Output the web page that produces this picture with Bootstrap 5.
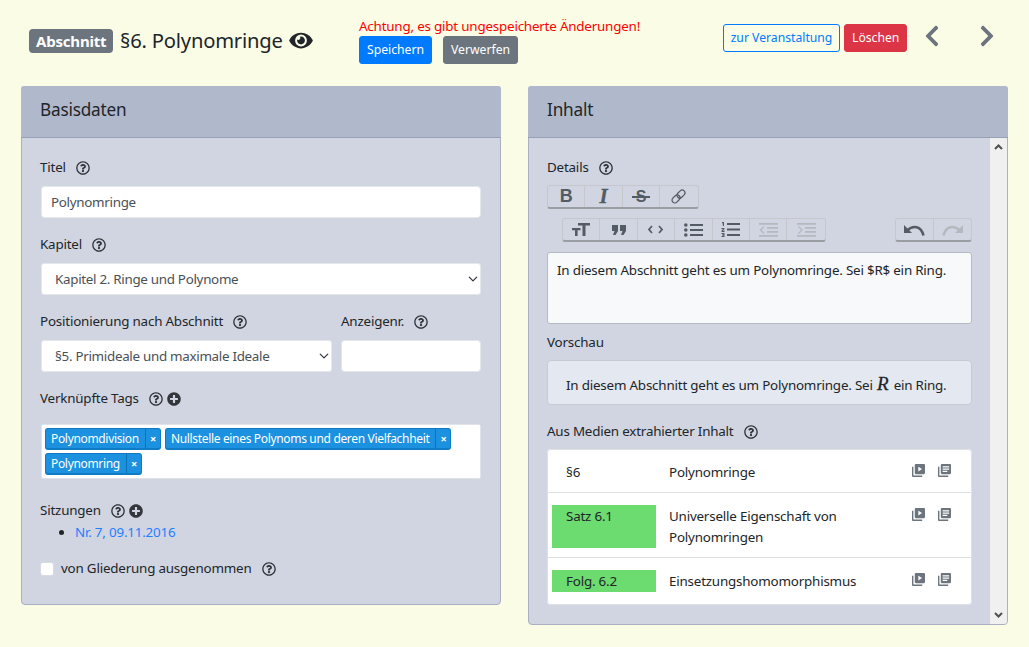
<!DOCTYPE html>
<html lang="de">
<head>
  <meta charset="UTF-8">
  <title>Abschnitt bearbeiten</title>
  <link href="https://cdn.jsdelivr.net/npm/bootstrap@5.3.3/dist/css/bootstrap.min.css" rel="stylesheet">
  <style>
    html, body { height: 100%; }
    body { background: #fafce6; color: #212529; font-family: "Noto Sans", sans-serif; font-size: 13.4px; letter-spacing: -0.2px; line-height: 21px; overflow: hidden; }
    svg { fill: currentColor; display: block; flex: none; }
    svg.line-ic { fill: none; stroke: currentColor; }

    .page-top { height: 86px; }
    .top-left { padding: 24px 0 0 29px; align-items: center; width: 359px; height: 56px; }
    .kind-tag { background: #6c757d; color: #fff; font-weight: 700; font-size: 15px; line-height: 24px; border-radius: 4px; padding: 0 7px; margin-top: 1px; width: 84px; white-space: nowrap; }
    .page-name { font-size: 20.2px; line-height: 30px; margin: 0 6px 0 7px; }
    .warn-col { padding-top: 16px; width: 364px; }
    .warn-text { color: #f00; line-height: 20px; }
    .save-row { gap: 11px; }
    .btn-tight { font-size: 12.2px; letter-spacing: 0; line-height: 18px; padding: 4px 7px; border-radius: 3px; height: 28px; white-space: nowrap; }
    .btn-blue { background: #007bff; border-color: #007bff; color: #fff; }
    .btn-blue-line { border-color: #007bff; color: #007bff; width: 117px; padding-left: 0; padding-right: 0; }
    .btn-grey { background: #6c757d; border-color: #6c757d; color: #fff; }
    .btn-red { background: #dc3545; border-color: #dc3545; color: #fff; }
    .top-right { padding-top: 24px; }
    .nav-arrow { color: #6c757d; }
    .arrow-prev { margin-left: 17px; }
    .arrow-next { margin-left: 39px; }

    .cols { padding-left: 21px; gap: 27px; align-items: flex-start; }
    .panel { width: 480px; background: #d0d5e1; border: 1px solid #a9b0c2; border-radius: 4px; }
    .panel-head { background: #b0b8cc; border-bottom: 1px solid #97a0b6; font-size: 17.2px; line-height: 26px; padding: 11px 19px 13px; color: #212529; border-radius: 3px 3px 0 0; margin: -1px -1px 0; height: 52px; }
    .panel-left-body { padding: 19px 19px 0; height: 466px; }
    .panel-right-body { height: 486px; display: flex; }
    .right-scroll { flex: 1; padding: 19px 0 0 18px; }
    .scroll-rail { width: 17px; background: #f0f0f0; display: flex; flex-direction: column; justify-content: space-between; align-items: center; padding: 6px 0; color: #505050; border-radius: 0 0 3px 0; }

    .field-label { display: flex; align-items: center; line-height: 21px; margin-bottom: 8px; }
    .panel-left-body .field-label { margin-left: -1px; }
    .panel-left-body .num-col .field-label { margin-left: 0; }
    .help-mark { width: 14px; height: 14px; margin-left: 10px; color: #2d3136; }
    .add-mark { width: 14px; height: 14px; margin-left: 4px; color: #33373c; }
    .field-gap { margin-bottom: 16px; }
    .form-control.plain-input, .form-select.plain-input { height: 32px; font-size: 13.4px; letter-spacing: -0.3px; line-height: 21px; padding: 5px 9px; border: 1px solid #e4e7ec; border-radius: 3px; color: #495057; }
    .form-select.plain-input { padding-left: 13px; background-position: right 2px center; background-size: 10px 10px; }
    .pos-col { width: 291px; }
    .num-col { width: 140px; margin-left: 1px; }

    .tag-box { background: #fff; border: 1px solid #e0e3ea; border-radius: 2px; height: 55px; padding: 3px; margin: 15px 0 21px; display: flex; flex-wrap: wrap; gap: 3px 4px; align-content: flex-start; }
    .tag-item { display: flex; height: 22px; background: #1b91e0; border: 1px solid #0f7bc4; border-bottom-width: 2px; border-radius: 3px; color: #fff; font-size: 12px; letter-spacing: -0.33px; line-height: 19px; }
    .tag-name { padding: 0 6px 0 5px; }
    .tag-x { border-left: 1px solid #0f72b5; width: 15px; text-align: center; font-weight: 700; font-size: 11px; }
    .session-list { padding-left: 34px; margin: -7px 0 15px; }
    .session-list a { color: #1f7fff; text-decoration: none; }
    .check-row { display: flex; align-items: center; margin-left: -1px; }
    .check-row .form-check-input { width: 14px; height: 14px; margin: 0 7px 0 0; border: 1px solid #d8dbe3; border-radius: 3px; }

    .tool-row { display: flex; width: fit-content; height: 24px; border: 1px solid #c4c7cc; border-bottom: 2px solid #9a9da2; border-radius: 3px; color: #555b62; }
    .tool-cell { width: 37.4px; display: flex; align-items: center; justify-content: center; border-right: 1px solid #c4c7cc; position: relative; }
    .tool-cell:last-child { border-right: 0; }
    .tool-off { color: #b4b9c0; }
    .tool-glyph-b { font-family: "Liberation Sans", sans-serif; font-weight: 700; font-size: 18px; }
    .tool-glyph-i { font-family: "Liberation Serif", serif; font-style: italic; font-weight: 700; font-size: 21px; -webkit-text-stroke: 0.3px #555b62; }
    .tool-glyph-s { font-family: "Liberation Sans", sans-serif; font-weight: 700; font-size: 16px; }
    .strike-line { position: absolute; left: 9px; right: 9px; top: 10px; height: 2px; background: #555b62; }
    .tool-line2 { margin: 9px 0 10px 15px; width: 410px; justify-content: space-between; }
    .editor-area { height: 72px; background: #f7f9fa; border: 1px solid #b6bac3; border-radius: 3px; padding: 7px 9px; margin-bottom: 8px; width: 425px; }
    .preview-box { height: 45px; width: 425px; background: #e4e8f0; border: 1px solid #c6cad3; border-radius: 4px; padding: 12px 18px; margin-bottom: 16px; white-space: nowrap; }
    .math-r { font-family: "Liberation Serif", serif; font-style: italic; font-size: 19px; margin: 0 2px 0 1px; -webkit-text-stroke: 0.3px #212529; }
    .extract-list { width: 425px; border-radius: 4px; background: #fff; }
    .extract-list .list-group-item { border-color: #dde0e5; padding: 12px 0 9px 4px; display: flex; font-size: 13.4px; line-height: 21px; color: #212529; }
    .extract-list .row-first { padding-top: 11px; padding-bottom: 9px; }
    .extract-list .row-last { padding-bottom: 12px; }
    .num-cell { width: 104px; padding: 1px 0 0 14px; flex: none; }
    .num-green { background: #6cdb70; }
    .num-tall { height: 43px; }
    .num-short { height: 22px; }
    .title-cell { width: 243px; padding-top: 1px; margin-left: 13px; flex: none; }
    .media-icons { display: flex; gap: 13px; color: #6c757d; padding-top: 3px; }
  </style>
</head>
<body>
  <svg width="0" height="0" class="position-absolute">
    <defs>
      <symbol id="ic-help" viewBox="0 0 512 512"><path d="M256 8C119.043 8 8 119.083 8 256c0 136.997 111.043 248 248 248s248-111.003 248-248C504 119.083 392.957 8 256 8zm0 448c-110.532 0-200-89.431-200-200 0-110.495 89.472-200 200-200 110.491 0 200 89.471 200 200 0 110.53-89.431 200-200 200zm107.244-255.2c0 67.052-72.421 68.084-72.421 92.863V300c0 6.627-5.373 12-12 12h-45.647c-6.627 0-12-5.373-12-12v-8.659c0-35.745 27.1-50.034 47.579-61.516 17.561-9.845 28.324-16.541 28.324-29.579 0-17.246-21.999-28.693-39.784-28.693-23.189 0-33.894 10.977-48.942 29.969-4.057 5.12-11.46 6.071-16.666 2.124l-27.824-21.098c-5.107-3.872-6.251-11.066-2.644-16.363C184.846 131.491 214.94 112 261.794 112c49.071 0 101.45 38.304 101.45 88.8zM298 368c0 23.159-18.841 42-42 42s-42-18.841-42-42 18.841-42 42-42 42 18.841 42 42z"/></symbol>
      <symbol id="ic-plus" viewBox="0 0 512 512"><path d="M256 8C119 8 8 119 8 256s111 248 248 248 248-111 248-248S393 8 256 8zm144 276c0 6.6-5.4 12-12 12h-92v92c0 6.6-5.4 12-12 12h-56c-6.6 0-12-5.4-12-12v-92h-92c-6.6 0-12-5.4-12-12v-56c0-6.6 5.4-12 12-12h92v-92c0-6.6 5.4-12 12-12h56c6.6 0 12 5.4 12 12v92h92c6.6 0 12 5.4 12 12v56z"/></symbol>
      <symbol id="ic-video" viewBox="0 0 14 14"><rect x="3" y="0" width="11" height="11" rx="1.2"/><path d="M6.8 3l4 2.500-4 2.500z" fill="#fff"/><path d="M0 3h1.500v9.500H11V14H1a1 1 0 0 1-1-1z"/></symbol>
      <symbol id="ic-notes" viewBox="0 0 14 14"><rect x="3" y="0" width="11" height="11" rx="1.2"/><path d="M5 2.500h7v1.300H5zM5 4.900h7v1.300H5zM5 7.300h5v1.300H5z" fill="#fff"/><path d="M0 3h1.500v9.500H11V14H1a1 1 0 0 1-1-1z"/></symbol>
    </defs>
  </svg>

  <div class="page-top d-flex">
    <div class="top-left d-flex">
      <span class="kind-tag">Abschnitt</span>
      <span class="page-name">§6. Polynomringe</span>
      <svg width="24" height="21" viewBox="0 0 576 512" class="text-dark"><path d="M572.52 241.4C518.29 135.59 410.93 64 288 64S57.68 135.64 3.48 241.41a32.35 32.35 0 0 0 0 29.19C57.71 376.41 165.07 448 288 448s230.32-71.64 284.52-177.41a32.35 32.35 0 0 0 0-29.19zM288 400a144 144 0 1 1 144-144 143.93 143.93 0 0 1-144 144zm0-240a95.31 95.31 0 0 0-25.31 3.79 47.85 47.85 0 0 1-66.9 66.9A95.78 95.78 0 1 0 288 160z"/></svg>
    </div>
    <div class="warn-col">
      <div class="warn-text">Achtung, es gibt ungespeicherte Änderungen!</div>
      <div class="d-flex save-row">
        <button class="btn btn-tight btn-blue">Speichern</button>
        <button class="btn btn-tight btn-grey">Verwerfen</button>
      </div>
    </div>
    <div class="top-right d-flex">
      <button class="btn btn-tight btn-blue-line me-1">zur Veranstaltung</button>
      <button class="btn btn-tight btn-red">Löschen</button>
      <svg class="nav-arrow arrow-prev" width="16" height="24" viewBox="0 0 320 512"><path d="M34.52 239.03L228.87 44.69c9.37-9.37 24.57-9.37 33.94 0l22.67 22.67c9.36 9.36 9.37 24.52.04 33.9L131.49 256l154.02 154.75c9.34 9.38 9.32 24.54-.04 33.9l-22.67 22.67c-9.37 9.37-24.57 9.37-33.94 0L34.52 272.97c-9.37-9.37-9.37-24.57 0-33.94z"/></svg>
      <svg class="nav-arrow arrow-next" width="16" height="24" viewBox="0 0 320 512"><path d="M285.476 272.971L91.132 467.314c-9.373 9.373-24.569 9.373-33.941 0l-22.667-22.667c-9.357-9.357-9.375-24.522-.04-33.901L188.505 256 34.484 101.255c-9.335-9.379-9.317-24.544.04-33.901l22.667-22.667c9.373-9.373 24.569-9.373 33.941 0L285.475 239.03c9.373 9.372 9.373 24.568.001 33.941z"/></svg>
    </div>
  </div>

  <div class="cols d-flex">
    <!-- Basisdaten -->
    <div class="panel">
      <div class="panel-head">Basisdaten</div>
      <div class="panel-left-body">
        <div class="field-label">Titel <svg class="help-mark"><use href="#ic-help"/></svg></div>
        <input class="form-control plain-input field-gap" value="Polynomringe">

        <div class="field-label">Kapitel <svg class="help-mark"><use href="#ic-help"/></svg></div>
        <select class="form-select plain-input field-gap"><option>Kapitel 2. Ringe und Polynome</option></select>

        <div class="d-flex gap-2 field-gap">
          <div class="pos-col">
            <div class="field-label">Positionierung nach Abschnitt <svg class="help-mark"><use href="#ic-help"/></svg></div>
            <select class="form-select plain-input"><option>§5. Primideale und maximale Ideale</option></select>
          </div>
          <div class="num-col">
            <div class="field-label">Anzeigenr. <svg class="help-mark"><use href="#ic-help"/></svg></div>
            <input class="form-control plain-input">
          </div>
        </div>

        <div class="field-label mb-0">Verknüpfte Tags <svg class="help-mark"><use href="#ic-help"/></svg><svg class="add-mark"><use href="#ic-plus"/></svg></div>
        <div class="tag-box">
          <div class="tag-item"><span class="tag-name">Polynomdivision</span><span class="tag-x">×</span></div>
          <div class="tag-item"><span class="tag-name">Nullstelle eines Polynoms und deren Vielfachheit</span><span class="tag-x">×</span></div>
          <div class="tag-item"><span class="tag-name">Polynomring</span><span class="tag-x">×</span></div>
        </div>

        <div class="field-label">Sitzungen <svg class="help-mark"><use href="#ic-help"/></svg><svg class="add-mark"><use href="#ic-plus"/></svg></div>
        <ul class="session-list"><li><a href="#">Nr. 7, 09.11.2016</a></li></ul>

        <label class="check-row"><input type="checkbox" class="form-check-input">von Gliederung ausgenommen <svg class="help-mark"><use href="#ic-help"/></svg></label>
      </div>
    </div>

    <!-- Inhalt -->
    <div class="panel">
      <div class="panel-head">Inhalt</div>
      <div class="panel-right-body">
        <div class="right-scroll">
          <div class="field-label" style="margin-bottom:7px">Details <svg class="help-mark"><use href="#ic-help"/></svg></div>
          <div class="tool-row">
            <span class="tool-cell"><span class="tool-glyph-b">B</span></span>
            <span class="tool-cell"><span class="tool-glyph-i">I</span></span>
            <span class="tool-cell"><span class="tool-glyph-s">S</span><span class="strike-line"></span></span>
            <span class="tool-cell">
              <svg class="line-ic" width="17" height="17" viewBox="0 0 17 17" stroke-width="1.2"><g transform="rotate(-45 8.5 8.500)"><rect x="0.500" y="5.700" width="9" height="5.600" rx="2.800"/><rect x="7.500" y="5.700" width="9" height="5.600" rx="2.800"/></g></svg>
            </span>
          </div>
          <div class="d-flex tool-line2">
            <div class="tool-row">
              <span class="tool-cell"><svg width="18" height="13" viewBox="0 0 18 13"><path d="M6 0h12v2.600h-4.500V13h-3V2.600H6zM0 5h8.500v2.200H5.600V13H3V7.200H0z"/></svg></span>
              <span class="tool-cell"><svg width="14" height="10" viewBox="0 0 14 10"><path d="M0 0h6v6l-2.500 4H1l1.500-4H0zM8 0h6v6l-2.500 4H9l1.500-4H8z"/></svg></span>
              <span class="tool-cell"><svg class="line-ic" width="15" height="9" viewBox="0 0 15 9" stroke-width="1.700"><path d="M4 1L1 4.500 4 8M11 1l3 3.500L11 8"/></svg></span>
              <span class="tool-cell"><svg width="19" height="14" viewBox="0 0 19 14"><circle cx="1.800" cy="2" r="1.800"/><circle cx="1.800" cy="7" r="1.800"/><circle cx="1.800" cy="12" r="1.800"/><path d="M6 1h13v2H6zM6 6h13v2H6zM6 11h13v2H6z"/></svg></span>
              <span class="tool-cell"><svg width="19" height="15" viewBox="0 0 19 15"><path d="M1 0h2v4H1.800V1.200H1zM.5 6h3v1L1.900 8.500h1.600V10H.5V9l1.600-1.700H.5zM.5 11h3v4h-3v-1h1.800v-.5H1v-1h1.300V12H.5z"/><path d="M6 1h13v2H6zM6 6.500h13v2H6zM6 12h13v2H6z"/></svg></span>
              <span class="tool-cell tool-off"><svg width="19" height="14" viewBox="0 0 19 14"><path d="M0 0h19v1.800H0zM8 4h11v1.800H8zM8 8h11v1.800H8zM0 12h19v1.800H0z"/><path d="M5 3.500L1.500 7 5 10.500" fill="none" stroke="currentColor" stroke-width="1.300"/></svg></span>
              <span class="tool-cell tool-off"><svg width="19" height="14" viewBox="0 0 19 14"><path d="M0 0h19v1.800H0zM8 4h11v1.800H8zM8 8h11v1.800H8zM0 12h19v1.800H0z"/><path d="M1.500 3.500L5 7l-3.500 3.500" fill="none" stroke="currentColor" stroke-width="1.300"/></svg></span>
            </div>
            <div class="tool-row">
              <span class="tool-cell"><svg class="line-ic" width="21" height="12" viewBox="0 0 21 12" stroke-width="2.600"><path d="M0 1v8h8z" fill="currentColor" stroke="none"/><path d="M3 6.500C9 1 17 1.500 19.500 11.500"/></svg></span>
              <span class="tool-cell tool-off"><svg class="line-ic" width="21" height="12" viewBox="0 0 21 12" stroke-width="2.600"><path d="M21 1v8h-8z" fill="currentColor" stroke="none"/><path d="M18 6.500C12 1 4 1.500 1.500 11.500"/></svg></span>
            </div>
          </div>
          <div class="editor-area">In diesem Abschnitt geht es um Polynomringe. Sei $R$ ein Ring.</div>

          <div class="field-label" style="margin-bottom:7px">Vorschau</div>
          <div class="preview-box">In diesem Abschnitt geht es um Polynomringe. Sei <span class="math-r">R</span> ein Ring.</div>

          <div class="field-label" style="margin-bottom:7px">Aus Medien extrahierter Inhalt <svg class="help-mark"><use href="#ic-help"/></svg></div>
          <div class="list-group extract-list">
            <div class="list-group-item row-first">
              <div class="num-cell">§6</div>
              <div class="title-cell">Polynomringe</div>
              <div class="media-icons"><svg width="13" height="13"><use href="#ic-video"/></svg><svg width="13" height="13"><use href="#ic-notes"/></svg></div>
            </div>
            <div class="list-group-item">
              <div class="num-cell num-green num-tall">Satz 6.1</div>
              <div class="title-cell">Universelle Eigenschaft von Polynomringen</div>
              <div class="media-icons"><svg width="13" height="13"><use href="#ic-video"/></svg><svg width="13" height="13"><use href="#ic-notes"/></svg></div>
            </div>
            <div class="list-group-item row-last">
              <div class="num-cell num-green num-short">Folg. 6.2</div>
              <div class="title-cell">Einsetzungshomomorphismus</div>
              <div class="media-icons"><svg width="13" height="13"><use href="#ic-video"/></svg><svg width="13" height="13"><use href="#ic-notes"/></svg></div>
            </div>
          </div>
        </div>
        <div class="scroll-rail">
          <svg class="line-ic" width="9" height="6" viewBox="0 0 9 6" stroke-width="2"><path d="M1 5l3.500-3.500L8 5"/></svg>
          <svg class="line-ic" width="9" height="6" viewBox="0 0 9 6" stroke-width="2"><path d="M1 1l3.500 3.500L8 1"/></svg>
        </div>
      </div>
    </div>
  </div>
  <script src="https://cdn.jsdelivr.net/npm/bootstrap@5.3.3/dist/js/bootstrap.bundle.min.js"></script>
</body>
</html>
